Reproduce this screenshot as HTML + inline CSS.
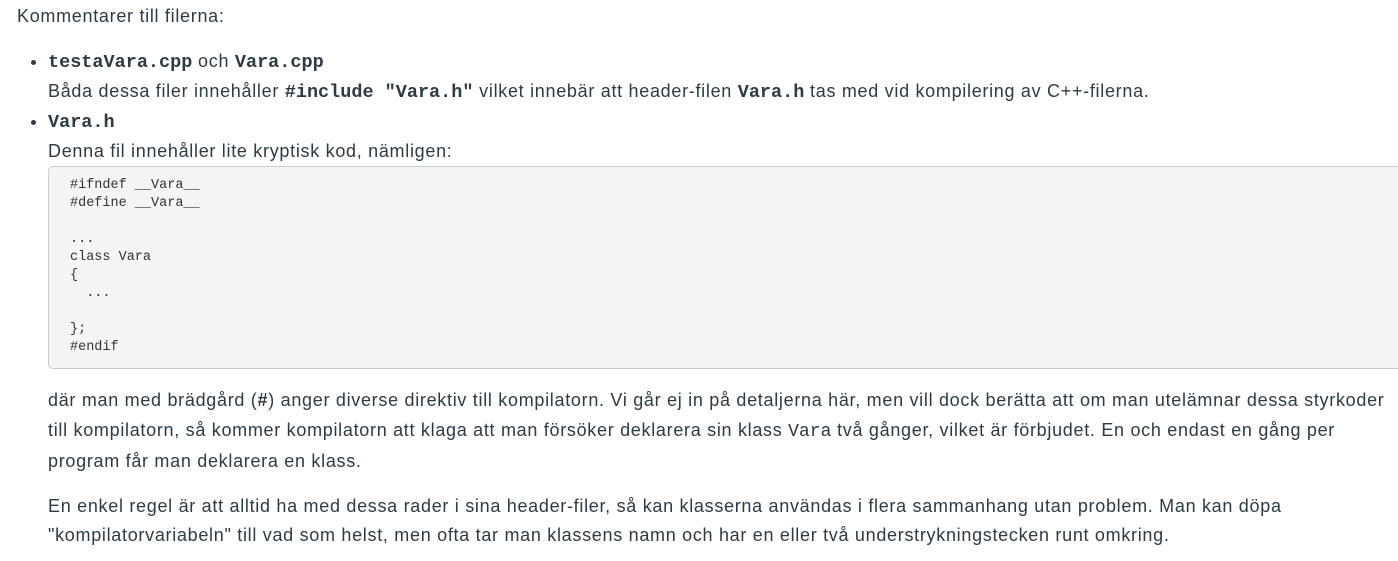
<!DOCTYPE html>
<html><head><meta charset="utf-8"><style>
body{margin:0;width:1398px;height:561px;overflow:hidden;background:#fff;font-family:"Liberation Sans",sans-serif;font-size:18px;letter-spacing:0.7px;color:#2d3b45;position:relative}
.a{position:absolute;white-space:nowrap;line-height:30px}
code{font-family:"Liberation Mono",monospace;font-weight:bold;font-size:18.5px;letter-spacing:0}
.box{position:absolute;left:48px;top:166px;width:1360px;height:203px;background:#f5f5f5;border:1px solid #c7cdd1;border-radius:5px;box-sizing:border-box}
pre{margin:0;position:absolute;left:21px;top:10px;font-family:"Liberation Mono",monospace;font-size:13.5px;line-height:18px;color:#333;letter-spacing:0}
.dot{position:absolute;width:5px;height:5px;border-radius:50%;background:#2d3b45}
</style></head><body>
<div class="a" style="left:17px;top:1px">Kommentarer till filerna:</div>
<div class="dot" style="left:31px;top:60px"></div>
<div class="a" style="left:48px;top:46px"><code>testaVara.cpp</code> och <code>Vara.cpp</code></div>
<div class="a" style="left:48px;top:76px">Båda dessa filer innehåller <code>#include "Vara.h"</code> vilket innebär att header-filen <code>Vara.h</code> tas med vid kompilering av C++-filerna.</div>
<div class="dot" style="left:31px;top:120px"></div>
<div class="a" style="left:48px;top:106px"><code>Vara.h</code></div>
<div class="a" style="left:48px;top:136px">Denna fil innehåller lite kryptisk kod, nämligen:</div>
<div class="box"><pre>#ifndef __Vara__
#define __Vara__

...
class Vara
{
  ...

};
#endif</pre></div>
<div class="a" style="left:48px;top:385px">där man med brädgård (<b>#</b>) anger diverse direktiv till kompilatorn. Vi går ej in på detaljerna här, men vill dock berätta att om man utelämnar dessa styrkoder</div>
<div class="a" style="left:48px;top:415px">till kompilatorn, så kommer kompilatorn att klaga att man försöker deklarera sin klass <span style="font-family:'Liberation Mono',monospace;font-size:18px;letter-spacing:0">Vara</span> två gånger, vilket är förbjudet. En och endast en gång per</div>
<div class="a" style="left:48px;top:446px">program får man deklarera en klass.</div>
<div class="a" style="left:48px;top:491px">En enkel regel är att alltid ha med dessa rader i sina header-filer, så kan klasserna användas i flera sammanhang utan problem. Man kan döpa</div>
<div class="a" style="left:48px;top:520px">"kompilatorvariabeln" till vad som helst, men ofta tar man klassens namn och har en eller två understrykningstecken runt omkring.</div>
</body></html>
